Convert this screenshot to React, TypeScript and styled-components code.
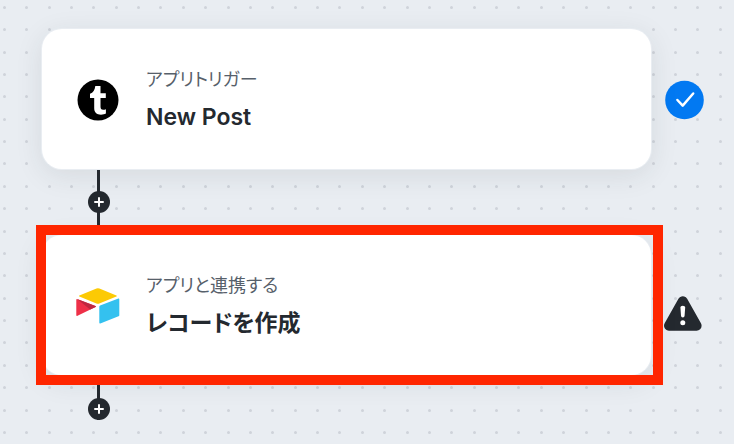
import React from "react";
import styled, { createGlobalStyle, css } from "styled-components";

const ink = "#24292f";

const GlobalStyle = createGlobalStyle`
  *, *::before, *::after { box-sizing: border-box; }
  body { margin: 0; background: #e9edf2; }
`;

const Canvas = styled.main`
  position: relative;
  min-height: 100vh;
  padding: 29px 29px 0 42px;
  overflow: hidden;
  background: #e9edf2;
  color: ${ink};
  font-family: Inter, "Noto Sans CJK JP", sans-serif;
`;

const DotGrid = styled.svg`
  position: absolute;
  inset: 0;
  width: 100%;
  height: 100%;
`;

const Flow = styled.div`
  position: relative;
  display: flex;
  flex-direction: column;
`;

const StepRow = styled.div`
  display: flex;
  align-items: center;
  gap: 14px;
`;

const Card = styled.article<{ $highlighted?: boolean }>`
  position: relative;
  flex: 1;
  display: flex;
  align-items: center;
  gap: 26px;
  min-height: 140px;
  padding: 0 34px;
  border-radius: 20px;
  background: #fff;
  box-shadow: 0 0 0 1px #e9edf2, 0 6px 28px rgba(36, 50, 50, 0.1);

  ${(p) =>
    p.$highlighted &&
    css`
      &::after {
        content: "";
        position: absolute;
        inset: -10px -12px -10px -6px;
        border: 10px solid #ff2600;
        pointer-events: none;
      }
    `}
`;

const AppIcon = styled.svg`
  flex: none;
  width: 44px;
  height: 44px;
`;

const StepText = styled.div`
  display: flex;
  flex-direction: column;
  gap: 8px;
  padding-top: 2px;
  font-feature-settings: "palt";
`;

const StepKind = styled.p`
  margin: 0;
  font-size: 18px;
  line-height: 26px;
  color: #57606a;
`;

const StepTitle = styled.h2`
  margin: 0;
  font-size: 23px;
  line-height: 32px;
  font-weight: 600;
`;

const Status = styled.svg`
  flex: none;
  width: 40px;
  height: 56px;
  overflow: visible;
`;

const Connector = styled.div<{ $last?: boolean }>`
  display: grid;
  justify-items: center;
  align-items: ${(p) => (p.$last ? "end" : "center")};
  width: 22px;
  height: ${(p) => (p.$last ? 45 : 66)}px;
  margin-left: 46px;
  background: linear-gradient(${ink}, ${ink}) 9px 0 / 3px 100% no-repeat;
`;

const AddButton = styled.button`
  display: block;
  width: 22px;
  height: 22px;
  padding: 0;
  border: 0;
  border-radius: 50%;
  background: ${ink};
  color: #fff;
  cursor: pointer;

  svg { display: block; }
`;

const dotSteps = [0, 22, 45, 67, 89, 112, 134, 156];

function Dots() {
  return (
    <DotGrid aria-hidden="true">
      <defs>
        <pattern id="dots" x="3" y="6" width="179" height="179" patternUnits="userSpaceOnUse">
          {dotSteps.map((y) =>
            dotSteps.map((x) => <circle key={`${x}-${y}`} cx={x + 1.5} cy={y + 1.5} r="1.5" fill="#cfd3da" />)
          )}
        </pattern>
      </defs>
      <rect width="100%" height="100%" fill="url(#dots)" />
    </DotGrid>
  );
}

function TumblrIcon() {
  return (
    <AppIcon viewBox="0 0 44 44" role="img" aria-label="Tumblr">
      <circle cx="22" cy="23" r="20.5" fill="#000" />
      <path
        fill="#fff"
        d="M19.300 9h5.200v7.200h5.300v4.800h-5.300v8.600c0 2.200.8 3.200 2.600 3.200.9 0 2-.2 2.800-.6v4.400c-1.300.7-2.900 1.100-4.900 1.100-4.400 0-6.800-2.400-6.800-6.400v-10.300h-4.200v-4.200c3.200-1 4.800-3.600 5.300-7.800z"
      />
    </AppIcon>
  );
}

function AirtableIcon() {
  return (
    <AppIcon viewBox="0 0 44 44" role="img" aria-label="Airtable">
      <path fill="#fcca04" d="M20.500 5.500q1.400-.6 2.900 0l17 7q1.100.6 0 1.100l-17.100 6.900q-1.400.6-2.900 0l-17-6.900q-1.100-.6 0-1.200z" />
      <path fill="#34c1ef" d="M23.300 23.700q0-.8.8-1.100l18.300-7.100q.9-.2.9.7v16q0 .8-.8 1.100l-18.200 7.200q-1 .3-1-.7z" />
      <path fill="#ee3048" d="M1.600 16.200q-1.300-.5-1.300.7v15q0 1.400 1.200.8l18.100-8.600q.9-.6-.1-1z" />
      <path fill="#bf2840" d="M1.100 16.100l13 10.500 5.400-2.500q.9-.6-.1-1z" />
    </AppIcon>
  );
}

function DoneStatus() {
  return (
    <Status viewBox="0 0 40 56" role="img" aria-label="完了">
      <circle cx="19.500" cy="29" r="19.300" fill="#0279f2" />
      <path d="M12.400 29l5.300 5.600L28.200 22.500" fill="none" stroke="#fff" strokeWidth="2.500" strokeLinecap="round" strokeLinejoin="round" />
    </Status>
  );
}

function WarningStatus() {
  return (
    <Status viewBox="0 0 40 56" role="img" aria-label="警告">
      <path d="M17.800 24.300L4 48.700h27.600z" fill={ink} stroke={ink} strokeWidth="10" strokeLinejoin="round" />
      <path fill="#fff" d="M15.400 30.300q0-1.600 2.400-1.600t2.400 1.600l-.6 8.500q-.1 1.800-1.800 1.800t-1.800-1.800z" />
      <circle cx="17.800" cy="45.800" r="2.500" fill="#fff" />
    </Status>
  );
}

function Add() {
  return (
    <AddButton type="button" aria-label="ステップを追加">
      <svg width="22" height="22" viewBox="0 0 22 22" aria-hidden="true">
        <path d="M11 7v8M7 11h8" stroke="currentColor" strokeWidth="2" strokeLinecap="round" />
      </svg>
    </AddButton>
  );
}

export default function App() {
  return (
    <Canvas>
      <GlobalStyle />
      <Dots />
      <Flow>
        <StepRow>
          <Card>
            <TumblrIcon />
            <StepText>
              <StepKind>アプリトリガー</StepKind>
              <StepTitle>New Post</StepTitle>
            </StepText>
          </Card>
          <DoneStatus />
        </StepRow>
        <Connector>
          <Add />
        </Connector>
        <StepRow>
          <Card $highlighted>
            <AirtableIcon />
            <StepText>
              <StepKind>アプリと連携する</StepKind>
              <StepTitle>レコードを作成</StepTitle>
            </StepText>
          </Card>
          <WarningStatus />
        </StepRow>
        <Connector $last>
          <Add />
        </Connector>
      </Flow>
    </Canvas>
  );
}
